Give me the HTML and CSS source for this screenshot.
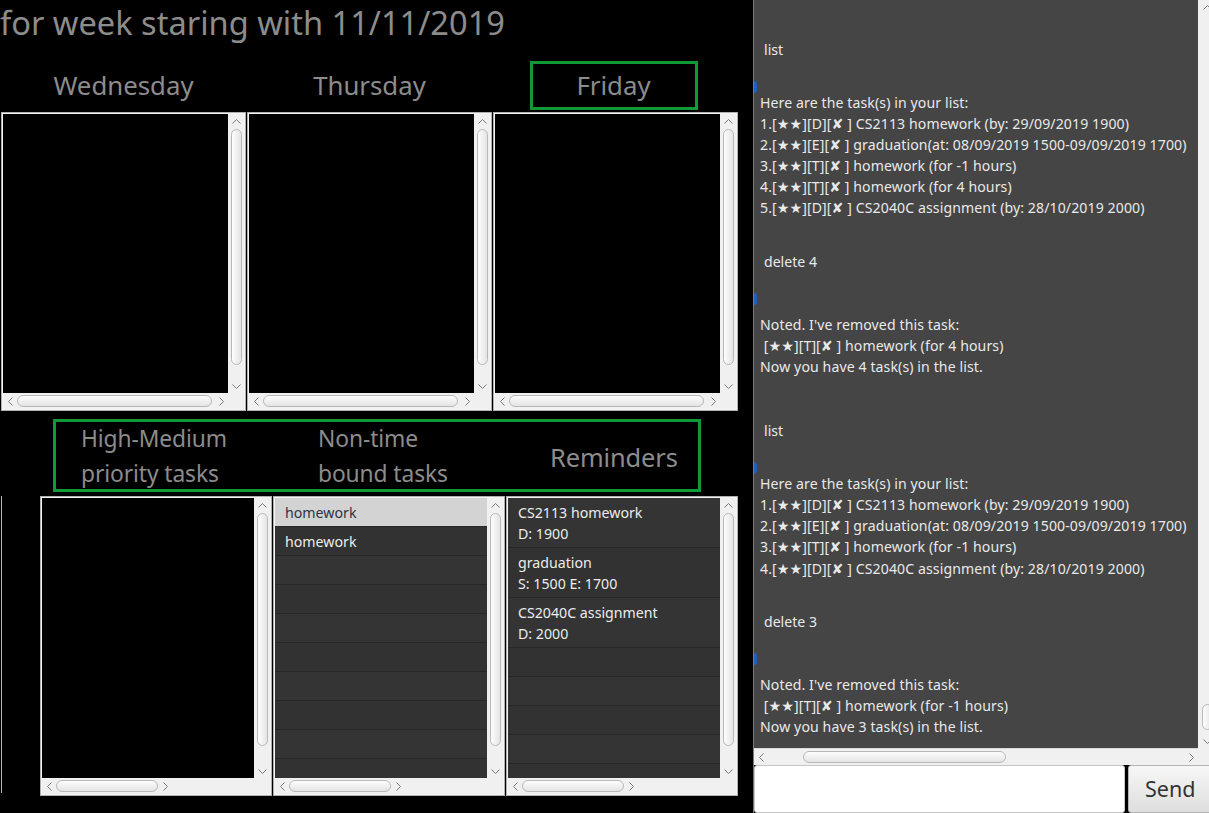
FILE: index.html
```html
<!DOCTYPE html>
<html>
<head>
<meta charset="utf-8">
<title>Week planner</title>
<link rel="stylesheet" href="styles.css">
</head>
<body>
<div class="app">
  <section class="planner">
    <h1 class="week-title">for week staring with 11/11/2019</h1>

    <div class="day-labels">
      <div class="day-label">Wednesday</div>
      <div class="day-label">Thursday</div>
      <div class="day-label"><span class="today">Friday</span></div>
    </div>

    <div class="day-panes">
      <div class="pane">
        <div class="pane-content black"></div>
        <div class="vbar"><div class="arrow"><svg width="9" height="5" viewBox="0 0 9 5"><path d="M0.5 4.5L4.5 0.5L8.5 4.5"/></svg></div><div class="vthumb top"></div><div class="arrow"><svg width="9" height="5" viewBox="0 0 9 5"><path d="M0.5 0.5L4.5 4.5L8.5 0.5"/></svg></div></div>
        <div class="hbar"><div class="arrow"><svg width="5" height="9" viewBox="0 0 5 9"><path d="M4.5 0.5L0.5 4.5L4.5 8.5"/></svg></div><div class="hthumb full"></div><div class="arrow"><svg width="5" height="9" viewBox="0 0 5 9"><path d="M0.5 0.5L4.5 4.5L0.5 8.5"/></svg></div></div>
        <div class="corner"></div>
      </div>
      <div class="pane">
        <div class="pane-content black"></div>
        <div class="vbar"><div class="arrow"><svg width="9" height="5" viewBox="0 0 9 5"><path d="M0.5 4.5L4.5 0.5L8.5 4.5"/></svg></div><div class="vthumb top"></div><div class="arrow"><svg width="9" height="5" viewBox="0 0 9 5"><path d="M0.5 0.5L4.5 4.5L8.5 0.5"/></svg></div></div>
        <div class="hbar"><div class="arrow"><svg width="5" height="9" viewBox="0 0 5 9"><path d="M4.5 0.5L0.5 4.5L4.5 8.5"/></svg></div><div class="hthumb full"></div><div class="arrow"><svg width="5" height="9" viewBox="0 0 5 9"><path d="M0.5 0.5L4.5 4.5L0.5 8.5"/></svg></div></div>
        <div class="corner"></div>
      </div>
      <div class="pane">
        <div class="pane-content black"></div>
        <div class="vbar"><div class="arrow"><svg width="9" height="5" viewBox="0 0 9 5"><path d="M0.5 4.5L4.5 0.5L8.5 4.5"/></svg></div><div class="vthumb top"></div><div class="arrow"><svg width="9" height="5" viewBox="0 0 9 5"><path d="M0.5 0.5L4.5 4.5L8.5 0.5"/></svg></div></div>
        <div class="hbar"><div class="arrow"><svg width="5" height="9" viewBox="0 0 5 9"><path d="M4.5 0.5L0.5 4.5L4.5 8.5"/></svg></div><div class="hthumb full"></div><div class="arrow"><svg width="5" height="9" viewBox="0 0 5 9"><path d="M0.5 0.5L4.5 4.5L0.5 8.5"/></svg></div></div>
        <div class="corner"></div>
      </div>
    </div>

    <div class="cat-header">
      <div class="cat-box">
        <div class="cat">High-Medium<br>priority tasks</div>
        <div class="cat">Non-time<br>bound tasks</div>
        <div class="cat single">Reminders</div>
      </div>
    </div>

    <div class="cat-panes">
      <div class="pane-edge"></div>

      <div class="pane">
        <div class="pane-content black"></div>
        <div class="vbar"><div class="arrow"><svg width="9" height="5" viewBox="0 0 9 5"><path d="M0.5 4.5L4.5 0.5L8.5 4.5"/></svg></div><div class="vthumb low"></div><div class="arrow"><svg width="9" height="5" viewBox="0 0 9 5"><path d="M0.5 0.5L4.5 4.5L8.5 0.5"/></svg></div></div>
        <div class="hbar"><div class="arrow"><svg width="5" height="9" viewBox="0 0 5 9"><path d="M4.5 0.5L0.5 4.5L4.5 8.5"/></svg></div><div class="hthumb half"></div><div class="arrow"><svg width="5" height="9" viewBox="0 0 5 9"><path d="M0.5 0.5L4.5 4.5L0.5 8.5"/></svg></div></div>
        <div class="corner"></div>
      </div>

      <div class="pane">
        <ul class="pane-content list">
          <li class="row selected">homework</li>
          <li class="row">homework</li>
          <li class="row"></li>
          <li class="row"></li>
          <li class="row"></li>
          <li class="row"></li>
          <li class="row"></li>
          <li class="row"></li>
          <li class="row"></li>
          <li class="row"></li>
        </ul>
        <div class="vbar"><div class="arrow"><svg width="9" height="5" viewBox="0 0 9 5"><path d="M0.5 4.5L4.5 0.5L8.5 4.5"/></svg></div><div class="vthumb low"></div><div class="arrow"><svg width="9" height="5" viewBox="0 0 9 5"><path d="M0.5 0.5L4.5 4.5L8.5 0.5"/></svg></div></div>
        <div class="hbar"><div class="arrow"><svg width="5" height="9" viewBox="0 0 5 9"><path d="M4.5 0.5L0.5 4.5L4.5 8.5"/></svg></div><div class="hthumb half"></div><div class="arrow"><svg width="5" height="9" viewBox="0 0 5 9"><path d="M0.5 0.5L4.5 4.5L0.5 8.5"/></svg></div></div>
        <div class="corner"></div>
      </div>

      <div class="pane">
        <ul class="pane-content list">
          <li class="row cell">CS2113 homework<br>D: 1900</li>
          <li class="row cell">graduation<br>S: 1500 E: 1700</li>
          <li class="row cell">CS2040C assignment<br>D: 2000</li>
          <li class="row"></li>
          <li class="row"></li>
          <li class="row"></li>
          <li class="row"></li>
          <li class="row"></li>
        </ul>
        <div class="vbar"><div class="arrow"><svg width="9" height="5" viewBox="0 0 9 5"><path d="M0.5 4.5L4.5 0.5L8.5 4.5"/></svg></div><div class="vthumb low"></div><div class="arrow"><svg width="9" height="5" viewBox="0 0 9 5"><path d="M0.5 0.5L4.5 4.5L8.5 0.5"/></svg></div></div>
        <div class="hbar"><div class="arrow"><svg width="5" height="9" viewBox="0 0 5 9"><path d="M4.5 0.5L0.5 4.5L4.5 8.5"/></svg></div><div class="hthumb half"></div><div class="arrow"><svg width="5" height="9" viewBox="0 0 5 9"><path d="M0.5 0.5L4.5 4.5L0.5 8.5"/></svg></div></div>
        <div class="corner"></div>
      </div>
    </div>
  </section>

  <section class="chat">
    <div class="chat-scroll">
      <div class="log">
        <div class="msg-user">list</div>
        <div class="msg-bot"><div class="sliver"></div><div class="bot-text">Here are the task(s) in your list:
1.[★★][D][✘ ] CS2113 homework (by: 29/09/2019 1900)
2.[★★][E][✘ ] graduation(at: 08/09/2019 1500-09/09/2019 1700)
3.[★★][T][✘ ] homework (for -1 hours)
4.[★★][T][✘ ] homework (for 4 hours)
5.[★★][D][✘ ] CS2040C assignment (by: 28/10/2019 2000)</div></div>
        <div class="msg-user">delete 4</div>
        <div class="msg-bot"><div class="sliver"></div><div class="bot-text">Noted. I've removed this task:
 [★★][T][✘ ] homework (for 4 hours)
Now you have 4 task(s) in the list.</div></div>
        <div class="msg-user">list</div>
        <div class="msg-bot"><div class="sliver"></div><div class="bot-text">Here are the task(s) in your list:
1.[★★][D][✘ ] CS2113 homework (by: 29/09/2019 1900)
2.[★★][E][✘ ] graduation(at: 08/09/2019 1500-09/09/2019 1700)
3.[★★][T][✘ ] homework (for -1 hours)
4.[★★][D][✘ ] CS2040C assignment (by: 28/10/2019 2000)</div></div>
        <div class="msg-user">delete 3</div>
        <div class="msg-bot"><div class="sliver"></div><div class="bot-text">Noted. I've removed this task:
 [★★][T][✘ ] homework (for -1 hours)
Now you have 3 task(s) in the list.</div></div>
      </div>
      <div class="vbar chat-vbar"><div class="arrow"><svg width="9" height="5" viewBox="0 0 9 5"><path d="M0.5 4.5L4.5 0.5L8.5 4.5"/></svg></div><div class="vtrack"><div class="vthumb chat-thumb"></div></div><div class="arrow"><svg width="9" height="5" viewBox="0 0 9 5"><path d="M0.5 0.5L4.5 4.5L8.5 0.5"/></svg></div></div>
      <div class="hbar chat-hbar"><div class="arrow"><svg width="5" height="9" viewBox="0 0 5 9"><path d="M4.5 0.5L0.5 4.5L4.5 8.5"/></svg></div><div class="htrack"><div class="hthumb chat-hthumb"></div></div><div class="arrow"><svg width="5" height="9" viewBox="0 0 5 9"><path d="M0.5 0.5L4.5 4.5L0.5 8.5"/></svg></div></div>
      <div class="corner"></div>
    </div>
    <div class="input-row">
      <input class="cmd" type="text">
      <button class="send">Send</button>
    </div>
  </section>
</div>
</body>
</html>
```

FILE: styles.css
```css
* { box-sizing: border-box; }

html, body {
  margin: 0;
  padding: 0;
  background: #000;
  overflow: hidden;
}

body {
  width: 1209px;
  height: 813px;
  font-family: "Noto Sans", "DejaVu Sans", sans-serif;
}

.app {
  display: flex;
  width: 1209px;
  height: 813px;
}

/* ---------- planner ---------- */
.planner {
  width: 753px;
  flex: 0 0 753px;
  overflow: hidden;
  background: #000;
  padding-left: 1px;
}

.week-title {
  margin: 0 0 0 -1px;
  padding: 0;
  height: 58px;
  font-size: 32.6px;
  font-weight: 400;
  line-height: 45px;
  color: #8c8c8c;
  white-space: nowrap;
}

.day-labels {
  display: flex;
  gap: 1px;
  height: 54px;
}

.day-label {
  width: 245px;
  flex: 0 0 245px;
  display: flex;
  align-items: center;
  justify-content: center;
  font-size: 25.8px;
  color: #8c8c8c;
}

.today {
  display: flex;
  align-items: center;
  justify-content: center;
  width: 168px;
  height: 49px;
  border: 3px solid #0f9a37;
  margin-left: -4px;
}

.day-panes {
  display: flex;
  gap: 1px;
  height: 299px;
}

.day-panes .pane {
  width: 245px;
  flex: 0 0 245px;
}

/* ---------- scroll panes ---------- */
.pane {
  display: grid;
  grid-template-columns: 1fr 16px;
  grid-template-rows: 1fr 16px;
  border: 1px solid #b0b0b0;
  padding: 1px;
  background: #f4f4f4;
  overflow: hidden;
}

.pane-content {
  margin: 0;
  padding: 0;
  min-height: 0;
  overflow: hidden;
}

.black { background: #000; }

.vbar {
  background: #f0f0f0;
  display: flex;
  flex-direction: column;
  align-items: center;
  min-height: 0;
}

.hbar {
  background: #f0f0f0;
  display: flex;
  flex-direction: row;
  align-items: center;
  min-width: 0;
}

.corner { background: #f0f0f0; }

.arrow {
  flex: 0 0 14px;
  display: flex;
  align-items: center;
  justify-content: center;
}

.vbar .arrow { width: 16px; height: 14px; }
.hbar .arrow { width: 16px; height: 16px; }

.arrow svg path {
  fill: none;
  stroke: #7a7a7a;
  stroke-width: 1;
}

.vthumb {
  width: 11px;
  border: 1px solid #b9b9b9;
  border-radius: 6px;
  background: linear-gradient(to right, #fdfdfd, #e4e4e4);
}

.vthumb.top { flex: 1; margin: 1px 0 14px; }
.vthumb.low { flex: 1; margin: 1px 0 18px; }

.hthumb {
  height: 12px;
  border: 1px solid #b9b9b9;
  border-radius: 6px;
  background: linear-gradient(to bottom, #fdfdfd, #e4e4e4);
}

.hthumb.full { flex: 1; margin-right: 2px; }
.hthumb.half { flex: 0 0 102px; }

/* ---------- category header ---------- */
.cat-header {
  height: 85px;
  padding-top: 8px;
  padding-left: 52px;
}

.cat-box {
  width: 648px;
  height: 73px;
  border: 3px solid #0f9a37;
  display: grid;
  grid-template-columns: 237px 232px 1fr;
  padding-left: 25px;
  align-items: center;
}

.cat {
  font-size: 22.8px;
  line-height: 35px;
  color: #8c8c8c;
  white-space: nowrap;
  margin-top: -1px;
  letter-spacing: -0.1px;
}

.cat.single { font-size: 25.4px; margin-top: 1px; }

.cat-panes {
  display: flex;
  gap: 1px;
  height: 300px;
}

.pane-edge {
  flex: 0 0 40px;
  width: 40px;
  margin-left: -39px;
  margin-right: 37px;
  border-right: 1px solid #b8b8b8;
  height: 297px;
}

.cat-panes .pane {
  width: 232px;
  flex: 0 0 232px;
}

/* ---------- list views ---------- */
.list {
  list-style: none;
  background: #333;
}

.row {
  height: 29px;
  border-bottom: 1px solid #282828;
  background: #343434;
  color: #ececec;
  font-size: 14.2px;
  line-height: 29px;
  padding-left: 10px;
  white-space: nowrap;
}

.row:nth-child(even) { background: #323232; }

.row.selected {
  background: #d3d3d3;
  color: #2e3440;
}

.row.cell {
  height: 50px;
  line-height: 21px;
  padding-top: 4px;
}

/* ---------- chat ---------- */
.chat {
  width: 456px;
  flex: 0 0 456px;
  overflow: hidden;
  border-left: 1px solid #7a7a7a;
  background: #f0f0f0;
  display: flex;
  flex-direction: column;
}

.chat-scroll {
  width: 462px;
  height: 765px;
  display: grid;
  grid-template-columns: 444px 18px;
  grid-template-rows: 1fr 17px;
}

.log {
  background: #454545;
  padding-top: 22.5px;
  overflow: hidden;
  color: #e9e9e9;
  font-size: 14.1px;
  line-height: 21.15px;
}

.msg-user {
  padding: 16px 10px;
  white-space: pre;
}

.msg-bot {
  display: flex;
  align-items: center;
  min-height: 116px;
  padding: 16px 0;
}

.sliver {
  align-self: flex-start;
  flex: 0 0 3px;
  width: 3px;
  height: 12px;
  margin-top: -11px;
  background: #1f5fc0;
  border-radius: 0 3px 3px 0;
}

.bot-text {
  padding-left: 3px;
  white-space: pre;
  letter-spacing: 0.1px;
}

.chat-vbar { padding-top: 0; }

.vtrack {
  flex: 1;
  display: flex;
  flex-direction: column;
  justify-content: flex-end;
  padding-bottom: 4px;
}

.chat-thumb {
  height: 26px;
  width: 11px;
}

.htrack {
  flex: 1;
  display: flex;
  align-items: center;
  padding-left: 35px;
}

.chat-hthumb { width: 203px; }

.chat-hbar { background: #f0f0f0; border-top: 1px solid #d8d8d8; }

.input-row {
  display: flex;
  height: 48px;
  background: #000;
  gap: 3px;
}

.cmd {
  width: 371px;
  flex: 0 0 371px;
  height: 48px;
  border: 1px solid #c6c6c6;
  border-radius: 3px;
  background: #fff;
  margin: 0;
}

.send {
  flex: 0 0 90px;
  height: 48px;
  margin: 0;
  border: 1px solid #b5b5b5;
  border-radius: 3px;
  background: linear-gradient(to bottom, #f7f7f7, #dedede);
  font-family: "Noto Sans", "DejaVu Sans", sans-serif;
  font-size: 21.5px;
  line-height: 44px;
  color: #333;
  text-align: left;
  padding: 0 0 0 16px;
}
```
